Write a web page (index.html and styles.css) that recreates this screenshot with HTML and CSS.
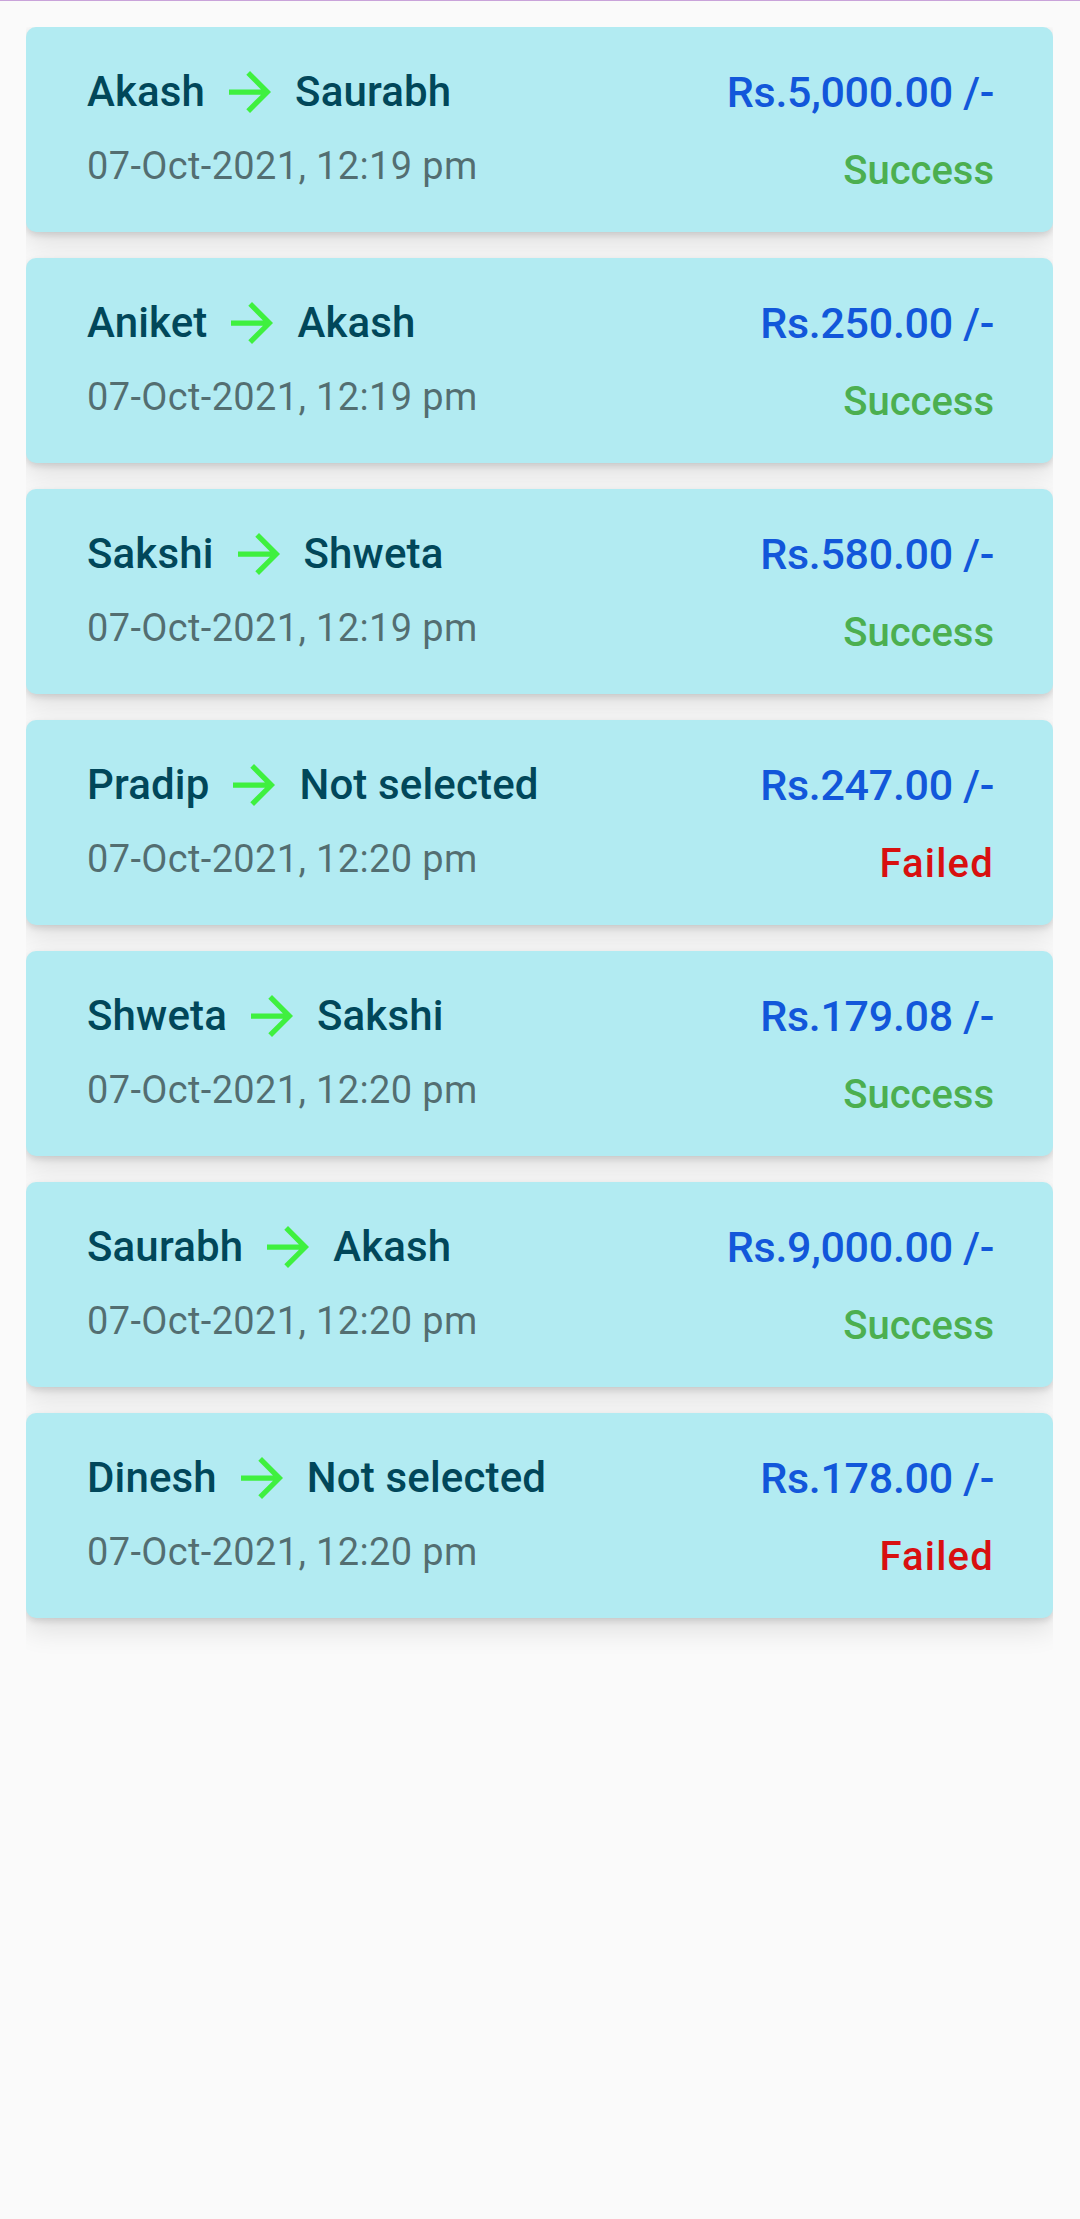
FILE: index.html
```html
<!DOCTYPE html>
<html lang="en">
<head>
<meta charset="utf-8">
<title>Transactions</title>
<link rel="stylesheet" href="styles.css">
</head>
<body>
<div class="topline"></div>
<div class="list">
  <div class="card">
    <div class="left">
      <div class="names"><span>Akash</span><svg class="arrow" viewBox="4 4 16 16"><path d="M12 4l-1.41 1.41L16.17 11H4v2h12.17l-5.58 5.59L12 20l8-8z"/></svg><span>Saurabh</span></div>
      <div class="date">07-Oct-2021, 12:19 pm</div>
    </div>
    <div class="right">
      <div class="amount">Rs.5,000.00 /-</div>
      <div class="status success">Success</div>
    </div>
  </div>
  <div class="card">
    <div class="left">
      <div class="names"><span>Aniket</span><svg class="arrow" viewBox="4 4 16 16"><path d="M12 4l-1.41 1.41L16.17 11H4v2h12.17l-5.58 5.59L12 20l8-8z"/></svg><span>Akash</span></div>
      <div class="date">07-Oct-2021, 12:19 pm</div>
    </div>
    <div class="right">
      <div class="amount">Rs.250.00 /-</div>
      <div class="status success">Success</div>
    </div>
  </div>
  <div class="card">
    <div class="left">
      <div class="names"><span>Sakshi</span><svg class="arrow" viewBox="4 4 16 16"><path d="M12 4l-1.41 1.41L16.17 11H4v2h12.17l-5.58 5.59L12 20l8-8z"/></svg><span>Shweta</span></div>
      <div class="date">07-Oct-2021, 12:19 pm</div>
    </div>
    <div class="right">
      <div class="amount">Rs.580.00 /-</div>
      <div class="status success">Success</div>
    </div>
  </div>
  <div class="card">
    <div class="left">
      <div class="names"><span>Pradip</span><svg class="arrow" viewBox="4 4 16 16"><path d="M12 4l-1.41 1.41L16.17 11H4v2h12.17l-5.58 5.59L12 20l8-8z"/></svg><span>Not selected</span></div>
      <div class="date">07-Oct-2021, 12:20 pm</div>
    </div>
    <div class="right">
      <div class="amount">Rs.247.00 /-</div>
      <div class="status failed">Failed</div>
    </div>
  </div>
  <div class="card">
    <div class="left">
      <div class="names"><span>Shweta</span><svg class="arrow" viewBox="4 4 16 16"><path d="M12 4l-1.41 1.41L16.17 11H4v2h12.17l-5.58 5.59L12 20l8-8z"/></svg><span>Sakshi</span></div>
      <div class="date">07-Oct-2021, 12:20 pm</div>
    </div>
    <div class="right">
      <div class="amount">Rs.179.08 /-</div>
      <div class="status success">Success</div>
    </div>
  </div>
  <div class="card">
    <div class="left">
      <div class="names"><span>Saurabh</span><svg class="arrow" viewBox="4 4 16 16"><path d="M12 4l-1.41 1.41L16.17 11H4v2h12.17l-5.58 5.59L12 20l8-8z"/></svg><span>Akash</span></div>
      <div class="date">07-Oct-2021, 12:20 pm</div>
    </div>
    <div class="right">
      <div class="amount">Rs.9,000.00 /-</div>
      <div class="status success">Success</div>
    </div>
  </div>
  <div class="card">
    <div class="left">
      <div class="names"><span>Dinesh</span><svg class="arrow" viewBox="4 4 16 16"><path d="M12 4l-1.41 1.41L16.17 11H4v2h12.17l-5.58 5.59L12 20l8-8z"/></svg><span>Not selected</span></div>
      <div class="date">07-Oct-2021, 12:20 pm</div>
    </div>
    <div class="right">
      <div class="amount">Rs.178.00 /-</div>
      <div class="status failed">Failed</div>
    </div>
  </div>
</div>
</body>
</html>
```
FILE: styles.css
```css
html, body {
  margin: 0;
  padding: 0;
  background: #fafafa;
  font-family: Roboto, "Noto Sans", "Liberation Sans", sans-serif;
}

.topline {
  height: 1px;
  background: #c9a3da;
}

.list {
  margin: 26px 27px 0 26px;
  padding-bottom: 44px;
  overflow: hidden;
  display: flex;
  flex-direction: column;
  gap: 26px;
}

.card {
  box-sizing: border-box;
  height: 205px;
  padding: 35px 59px 0 61px;
  background: #b2ebf2;
  border-radius: 10px;
  display: flex;
  justify-content: space-between;
  box-shadow: 0 3px 6px rgba(0, 0, 0, 0.12), 0 12px 28px rgba(0, 0, 0, 0.11);
}

.left, .right {
  display: flex;
  flex-direction: column;
}

.right {
  align-items: flex-end;
}

.names {
  display: flex;
  align-items: center;
  height: 60px;
  font-size: 42px;
  line-height: 60px;
  font-weight: 500;
  color: #01475a;
  letter-spacing: 0.15px;
}

.arrow {
  width: 42px;
  height: 42px;
  fill: #3ff03f;
  margin: 0 24px 0 24px;
}

.date {
  margin-top: 19px;
  font-size: 38px;
  line-height: 50px;
  color: rgba(0, 0, 0, 0.54);
  letter-spacing: 0.35px;
}

.amount {
  height: 60px;
  font-size: 43px;
  line-height: 60px;
  font-weight: 500;
  color: #1257da;
  letter-spacing: -0.3px;
}

.status {
  margin-top: 24px;
  font-size: 40px;
  line-height: 50px;
  font-weight: 500;
}

.success {
  color: #4caf50;
}

.failed {
  color: #d81010;
  letter-spacing: 1.2px;
}
```
